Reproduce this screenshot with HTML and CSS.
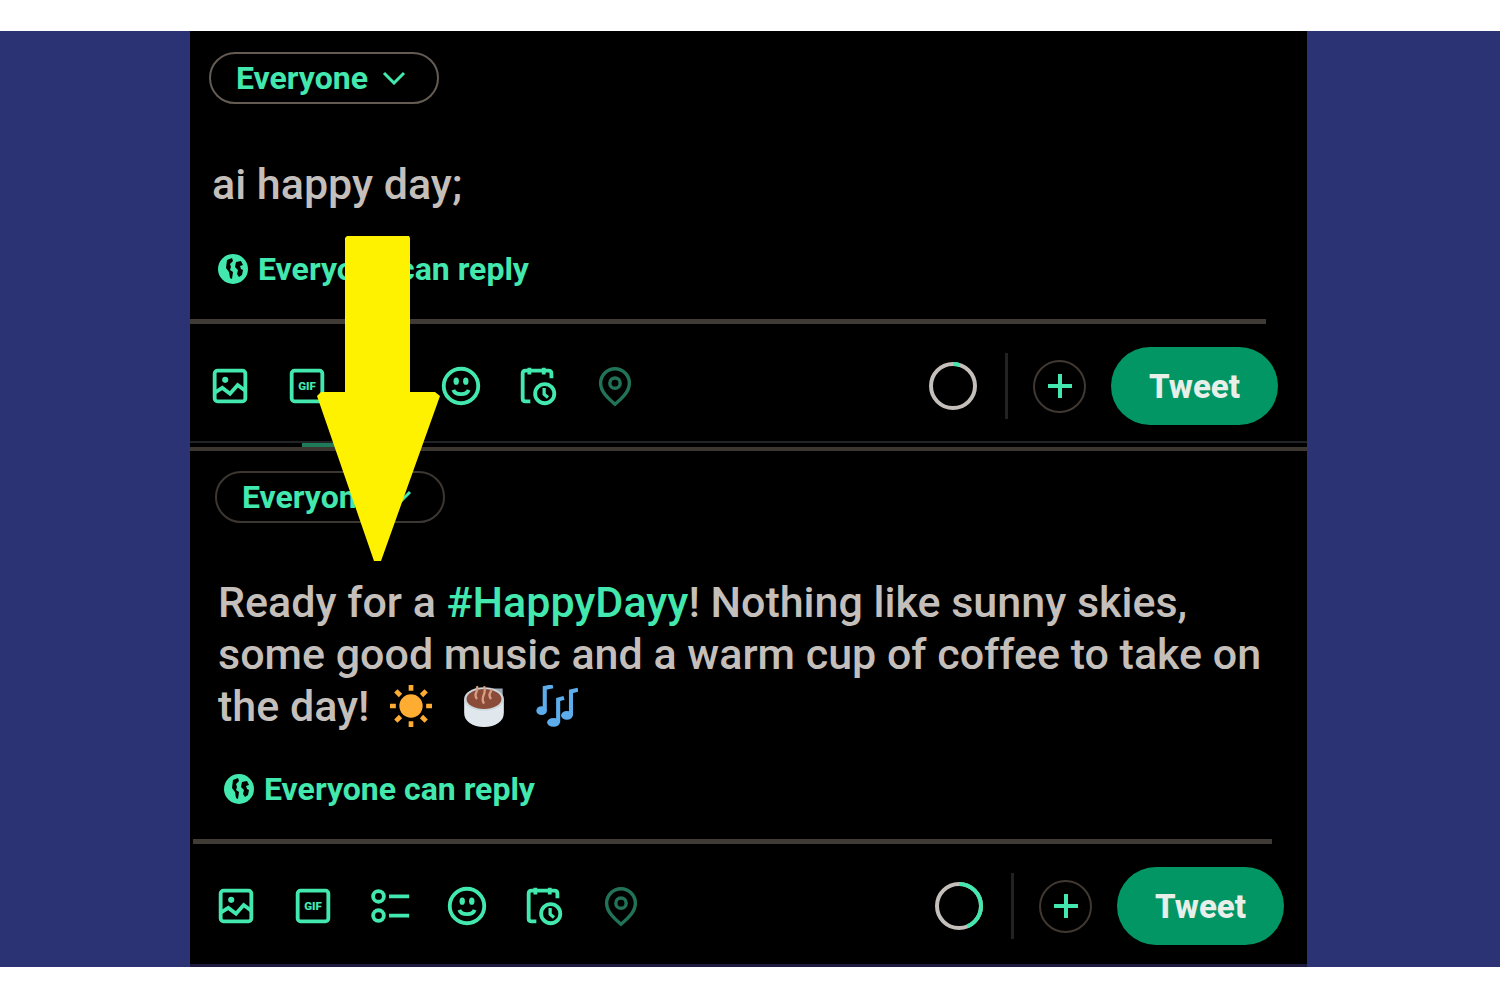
FILE: index.html
```html
<!DOCTYPE html>
<html lang="en">

<head>
    <meta charset="UTF-8">
    <meta name="viewport" content="width=device-width, initial-scale=1.0">
    <title>Tweet Composer</title>
    <link rel="stylesheet" href="styles.css">
</head>

<body>
    <!-- Shared icons -->
    <svg class="sprite" aria-hidden="true">
        <symbol id="chevron" viewBox="0 0 24 14">
            <path d="M2 2l10 10L22 2" fill="none" stroke="currentColor" stroke-width="3" />
        </symbol>
        <symbol id="globe" viewBox="0 0 30 30">
            <circle cx="15" cy="15" r="15" fill="currentColor" />
            <path d="M9 6l5-2 1 3-3 3 1 3-1 3 3 2-1 7-2-1-1-6-3-4zM18 8l5-1 2 4-3 1 1 3 2 1-1 5-3 2-2-3 1-4-3-3z" fill="#000" />
        </symbol>
        <symbol id="image" viewBox="0 0 24 24">
            <g fill="none" stroke="currentColor" stroke-width="2">
                <rect x="4" y="4" width="16" height="16" rx="1.5" />
                <path d="M4 15.5l4-2.5 4 3 4-4.500 4 3" />
            </g>
            <circle cx="9.5" cy="8.8" r="1.6" fill="currentColor" />
        </symbol>
        <symbol id="poll" viewBox="0 0 24 24">
            <g fill="none" stroke="currentColor" stroke-width="2">
                <circle cx="6" cy="7" r="2.8" />
                <circle cx="6" cy="17" r="2.8" />
                <path d="M11.5 7H22M11.5 17H22" />
            </g>
        </symbol>
        <symbol id="smile" viewBox="0 0 24 24">
            <circle cx="12" cy="12" r="9" fill="none" stroke="currentColor" stroke-width="2" />
            <path d="M8 14c1 3 7 3 8 0" fill="none" stroke="currentColor" stroke-width="2" />
            <ellipse cx="9.5" cy="9.5" rx="1.4" ry="1.9" fill="currentColor" />
            <ellipse cx="14.5" cy="9.5" rx="1.4" ry="1.9" fill="currentColor" />
        </symbol>
        <symbol id="schedule" viewBox="0 0 24 24">
            <g fill="none" stroke="currentColor" stroke-width="2">
                <path d="M8 20H5.5Q4 20 4 18.5V5.5Q4 4 5.5 4H17.500Q19 4 19 5.5V8" />
                <path d="M7.500 2.500v3.500M15 2.500v3.500" />
                <circle cx="15.5" cy="16" r="5" />
                <path d="M15.2 13v3.300l2 1.700" stroke-width="1.7" />
            </g>
        </symbol>
        <symbol id="pin" viewBox="0 0 24 24">
            <g fill="none" stroke="currentColor" stroke-width="1.8">
                <path d="M12 21.500C8.500 18.500 4.500 15 4.500 10.500a7.500 7.500 0 0 1 15 0c0 4.500-4 8-7.500 11z" />
                <circle cx="12" cy="10.5" r="2.7" />
            </g>
        </symbol>
        <symbol id="plus" viewBox="0 0 24 24">
            <path d="M12 0v24M0 12h24" stroke="currentColor" stroke-width="4" />
        </symbol>
    </svg>

    <main class="stage">
        <div class="panel">
            <section class="composer">
                <button class="audience" type="button">Everyone <svg class="chevron"><use href="#chevron" /></svg></button>
                <textarea class="tweet-text" rows="1" aria-label="Tweet text">ai happy day;</textarea>
                <button class="reply" type="button"><svg class="globe"><use href="#globe" /></svg>Everyone can reply</button>
                <hr class="divider">
                <div class="toolbar">
                    <div class="tools">
                        <button class="tool" type="button" aria-label="Media"><svg><use href="#image" /></svg></button>
                        <button class="tool" type="button" aria-label="GIF">
                            <svg viewBox="0 0 24 24">
                                <rect x="4" y="4" width="16" height="16" rx="1.5" fill="none" stroke="currentColor" stroke-width="2" />
                                <text x="12" y="14" text-anchor="middle" class="gif-text">GIF</text>
                            </svg>
                        </button>
                        <button class="tool" type="button" aria-label="Poll"><svg><use href="#poll" /></svg></button>
                        <button class="tool" type="button" aria-label="Emoji"><svg><use href="#smile" /></svg></button>
                        <button class="tool" type="button" aria-label="Schedule"><svg><use href="#schedule" /></svg></button>
                        <button class="tool" type="button" aria-label="Location" disabled><svg><use href="#pin" /></svg></button>
                    </div>
                    <div class="actions">
                        <svg class="ring" viewBox="0 0 54 54">
                            <circle class="ring-track" cx="27" cy="27" r="22" />
                            <circle class="ring-value" cx="27" cy="27" r="22" pathLength="100" stroke-dasharray="5 100" />
                        </svg>
                        <span class="separator"></span>
                        <button class="add" type="button" aria-label="Add tweet"><svg><use href="#plus" /></svg></button>
                        <button class="tweet" type="button">Tweet</button>
                    </div>
                </div>
            </section>

            <div class="split"><span class="split-tab"></span></div>

            <section class="composer composer-result">
                <button class="audience" type="button">Everyone <svg class="chevron"><use href="#chevron" /></svg></button>
                <div class="tweet-text" contenteditable="true" spellcheck="false" role="textbox" aria-label="Tweet text">Ready for a <a href="#HappyDayy">#HappyDayy</a>! Nothing like sunny skies, some good music and a warm cup of coffee to take on the day!
                    <svg class="emoji" viewBox="0 0 36 36" role="img" aria-label="sun">
                        <circle cx="18" cy="18" r="10" fill="#ffac33" />
                        <path d="M18 0v5M18 31v5M0 18h5M31 18h5M5 5l4 4M27 27l4 4M31 5l-4 4M9 27l-4 4" stroke="#ffac33" stroke-width="4" />
                    </svg>
                    <svg class="emoji" viewBox="0 0 36 36" role="img" aria-label="coffee">
                        <path d="M25 3h9v15h-9z" fill="#99aab5" />
                        <path d="M1 12v12c0 7 7 12 17 12s17-5 17-12V12z" fill="#e1e8ed" />
                        <ellipse cx="18" cy="12" rx="17" ry="10" fill="#ccd6dd" />
                        <ellipse cx="18" cy="12" rx="15" ry="8.5" fill="#8a4b38" />
                        <path d="M12 12c-4-5 2-6 0-11M18 16c-4-6 3-8 0-15M24 12c-4-5 2-6 0-9" fill="none" stroke="#d99e82" stroke-width="2" />
                    </svg>
                    <svg class="emoji" viewBox="0 0 36 36" role="img" aria-label="music">
                        <path d="M7.500 22V2.500l7-1.500M19 32V12.500l5-1.500M30 26V5.500l6-1.500" fill="none" stroke="#5dadec" stroke-width="3.500" />
                        <g fill="#5dadec">
                            <ellipse cx="4.800" cy="22" rx="4.500" ry="3.800" />
                            <ellipse cx="15" cy="32" rx="5.500" ry="3.800" />
                            <ellipse cx="26.500" cy="26" rx="5" ry="3.800" />
                        </g>
                    </svg></div>
                <button class="reply" type="button"><svg class="globe"><use href="#globe" /></svg>Everyone can reply</button>
                <hr class="divider">
                <div class="toolbar">
                    <div class="tools">
                        <button class="tool" type="button" aria-label="Media"><svg><use href="#image" /></svg></button>
                        <button class="tool" type="button" aria-label="GIF">
                            <svg viewBox="0 0 24 24">
                                <rect x="4" y="4" width="16" height="16" rx="1.5" fill="none" stroke="currentColor" stroke-width="2" />
                                <text x="12" y="14" text-anchor="middle" class="gif-text">GIF</text>
                            </svg>
                        </button>
                        <button class="tool" type="button" aria-label="Poll"><svg><use href="#poll" /></svg></button>
                        <button class="tool" type="button" aria-label="Emoji"><svg><use href="#smile" /></svg></button>
                        <button class="tool" type="button" aria-label="Schedule"><svg><use href="#schedule" /></svg></button>
                        <button class="tool" type="button" aria-label="Location" disabled><svg><use href="#pin" /></svg></button>
                    </div>
                    <div class="actions">
                        <svg class="ring" viewBox="0 0 54 54">
                            <circle class="ring-track" cx="27" cy="27" r="22" />
                            <circle class="ring-value" cx="27" cy="27" r="22" pathLength="100" stroke-dasharray="44 100" />
                        </svg>
                        <span class="separator"></span>
                        <button class="add" type="button" aria-label="Add tweet"><svg><use href="#plus" /></svg></button>
                        <button class="tweet" type="button">Tweet</button>
                    </div>
                </div>
            </section>

            <svg class="arrow" viewBox="0 0 124 325" aria-hidden="true">
                <path d="M30 0H92L93 2V156H118L123 160L64 325H57L0 160L4 156H28V2Z" fill="#fff200" />
            </svg>
        </div>
    </main>
</body>

</html>
```
FILE: styles.css
```css
* {
    box-sizing: border-box;
}

body {
    margin: 0;
    padding: 31px 0 32px;
    background: #fff;
    font-family: Roboto, "Liberation Sans", sans-serif;
}

.sprite {
    position: absolute;
    width: 0;
    height: 0;
}

button {
    padding: 0;
    border: none;
    background: none;
    color: #43e8ae;
    font-family: inherit;
    cursor: pointer;
}

.stage {
    padding: 0 193px 0 190px;
    background: #2c3374;
}

.panel {
    position: relative;
    background: #000;
    border-bottom: 3px solid #1d1a3f;
}

.composer {
    display: flex;
    flex-direction: column;
    align-items: flex-start;
    padding: 21px 29px 16px 0;
}

.composer-result {
    padding: 20px 23px 19px 6px;
}

.audience {
    display: flex;
    align-items: center;
    justify-content: center;
    gap: 14px;
    width: 230px;
    height: 52px;
    margin-left: 19px;
    padding-right: 6px;
    border: 2px solid #645b53;
    border-radius: 26px;
    font-size: 32px;
    font-weight: 700;
}

.composer-result .audience {
    border-color: #3d3732;
}

.chevron {
    width: 24px;
    height: 14px;
}

.tweet-text {
    display: block;
    align-self: stretch;
    margin: 54px 0 43px;
    padding: 0 0 0 22px;
    border: none;
    outline: none;
    resize: none;
    overflow: hidden;
    background: none;
    color: #c4bfba;
    font-family: inherit;
    font-size: 43px;
    font-weight: 500;
    line-height: 52px;
}

.composer-result .tweet-text {
    margin: 53px -10px 41px 0;
}

.tweet-text a {
    color: #43e8ae;
    text-decoration: none;
}

.emoji {
    width: 42px;
    height: 42px;
    margin: 0 10px;
    vertical-align: -6px;
}

.reply {
    display: flex;
    align-items: center;
    gap: 10px;
    height: 32px;
    margin-left: 28px;
    font-size: 32px;
    font-weight: 700;
}

.globe {
    width: 30px;
    height: 30px;
}

.divider {
    align-self: stretch;
    height: 5px;
    margin: 34px 12px 23px 0;
    border: none;
    background: #403b34;
}

.composer-result .divider {
    margin-left: -3px;
}

.toolbar {
    display: flex;
    align-items: center;
    justify-content: space-between;
    align-self: stretch;
    padding-left: 17px;
}

.tools {
    display: flex;
    gap: 31px;
}

.tool {
    width: 46px;
    height: 46px;
}

.tool svg {
    display: block;
    width: 46px;
    height: 46px;
}

.tool:disabled {
    color: #217257;
}

.gif-text {
    fill: currentColor;
    font-size: 6px;
    font-weight: 900;
}

.actions {
    display: flex;
    align-items: center;
    gap: 25px;
}

.ring {
    width: 54px;
    height: 54px;
    transform: rotate(-90deg);
}

.ring circle {
    fill: none;
    stroke-width: 4;
}

.ring-track {
    stroke: #c4bfba;
}

.ring .ring-value {
    stroke: #43e8ae;
}

.separator {
    width: 3px;
    height: 66px;
    background: #202224;
}

.add {
    display: flex;
    align-items: center;
    justify-content: center;
    width: 53px;
    height: 53px;
    border: 2px solid #403831;
    border-radius: 50%;
}

.add svg {
    width: 24px;
    height: 24px;
}

.tweet {
    width: 167px;
    height: 78px;
    border-radius: 39px;
    background: #029664;
    color: #e8efe9;
    font-size: 33px;
    font-weight: 800;
}

/* Double rule between the two composers */
.split {
    display: flex;
    height: 10px;
    border-top: 2px solid #222528;
    border-bottom: 4px solid #3b362f;
}

.split-tab {
    width: 38px;
    height: 4px;
    margin-left: 112px;
    background: #1f7a59;
}

.arrow {
    position: absolute;
    top: 205px;
    left: 127px;
    width: 124px;
    height: 325px;
}
```
